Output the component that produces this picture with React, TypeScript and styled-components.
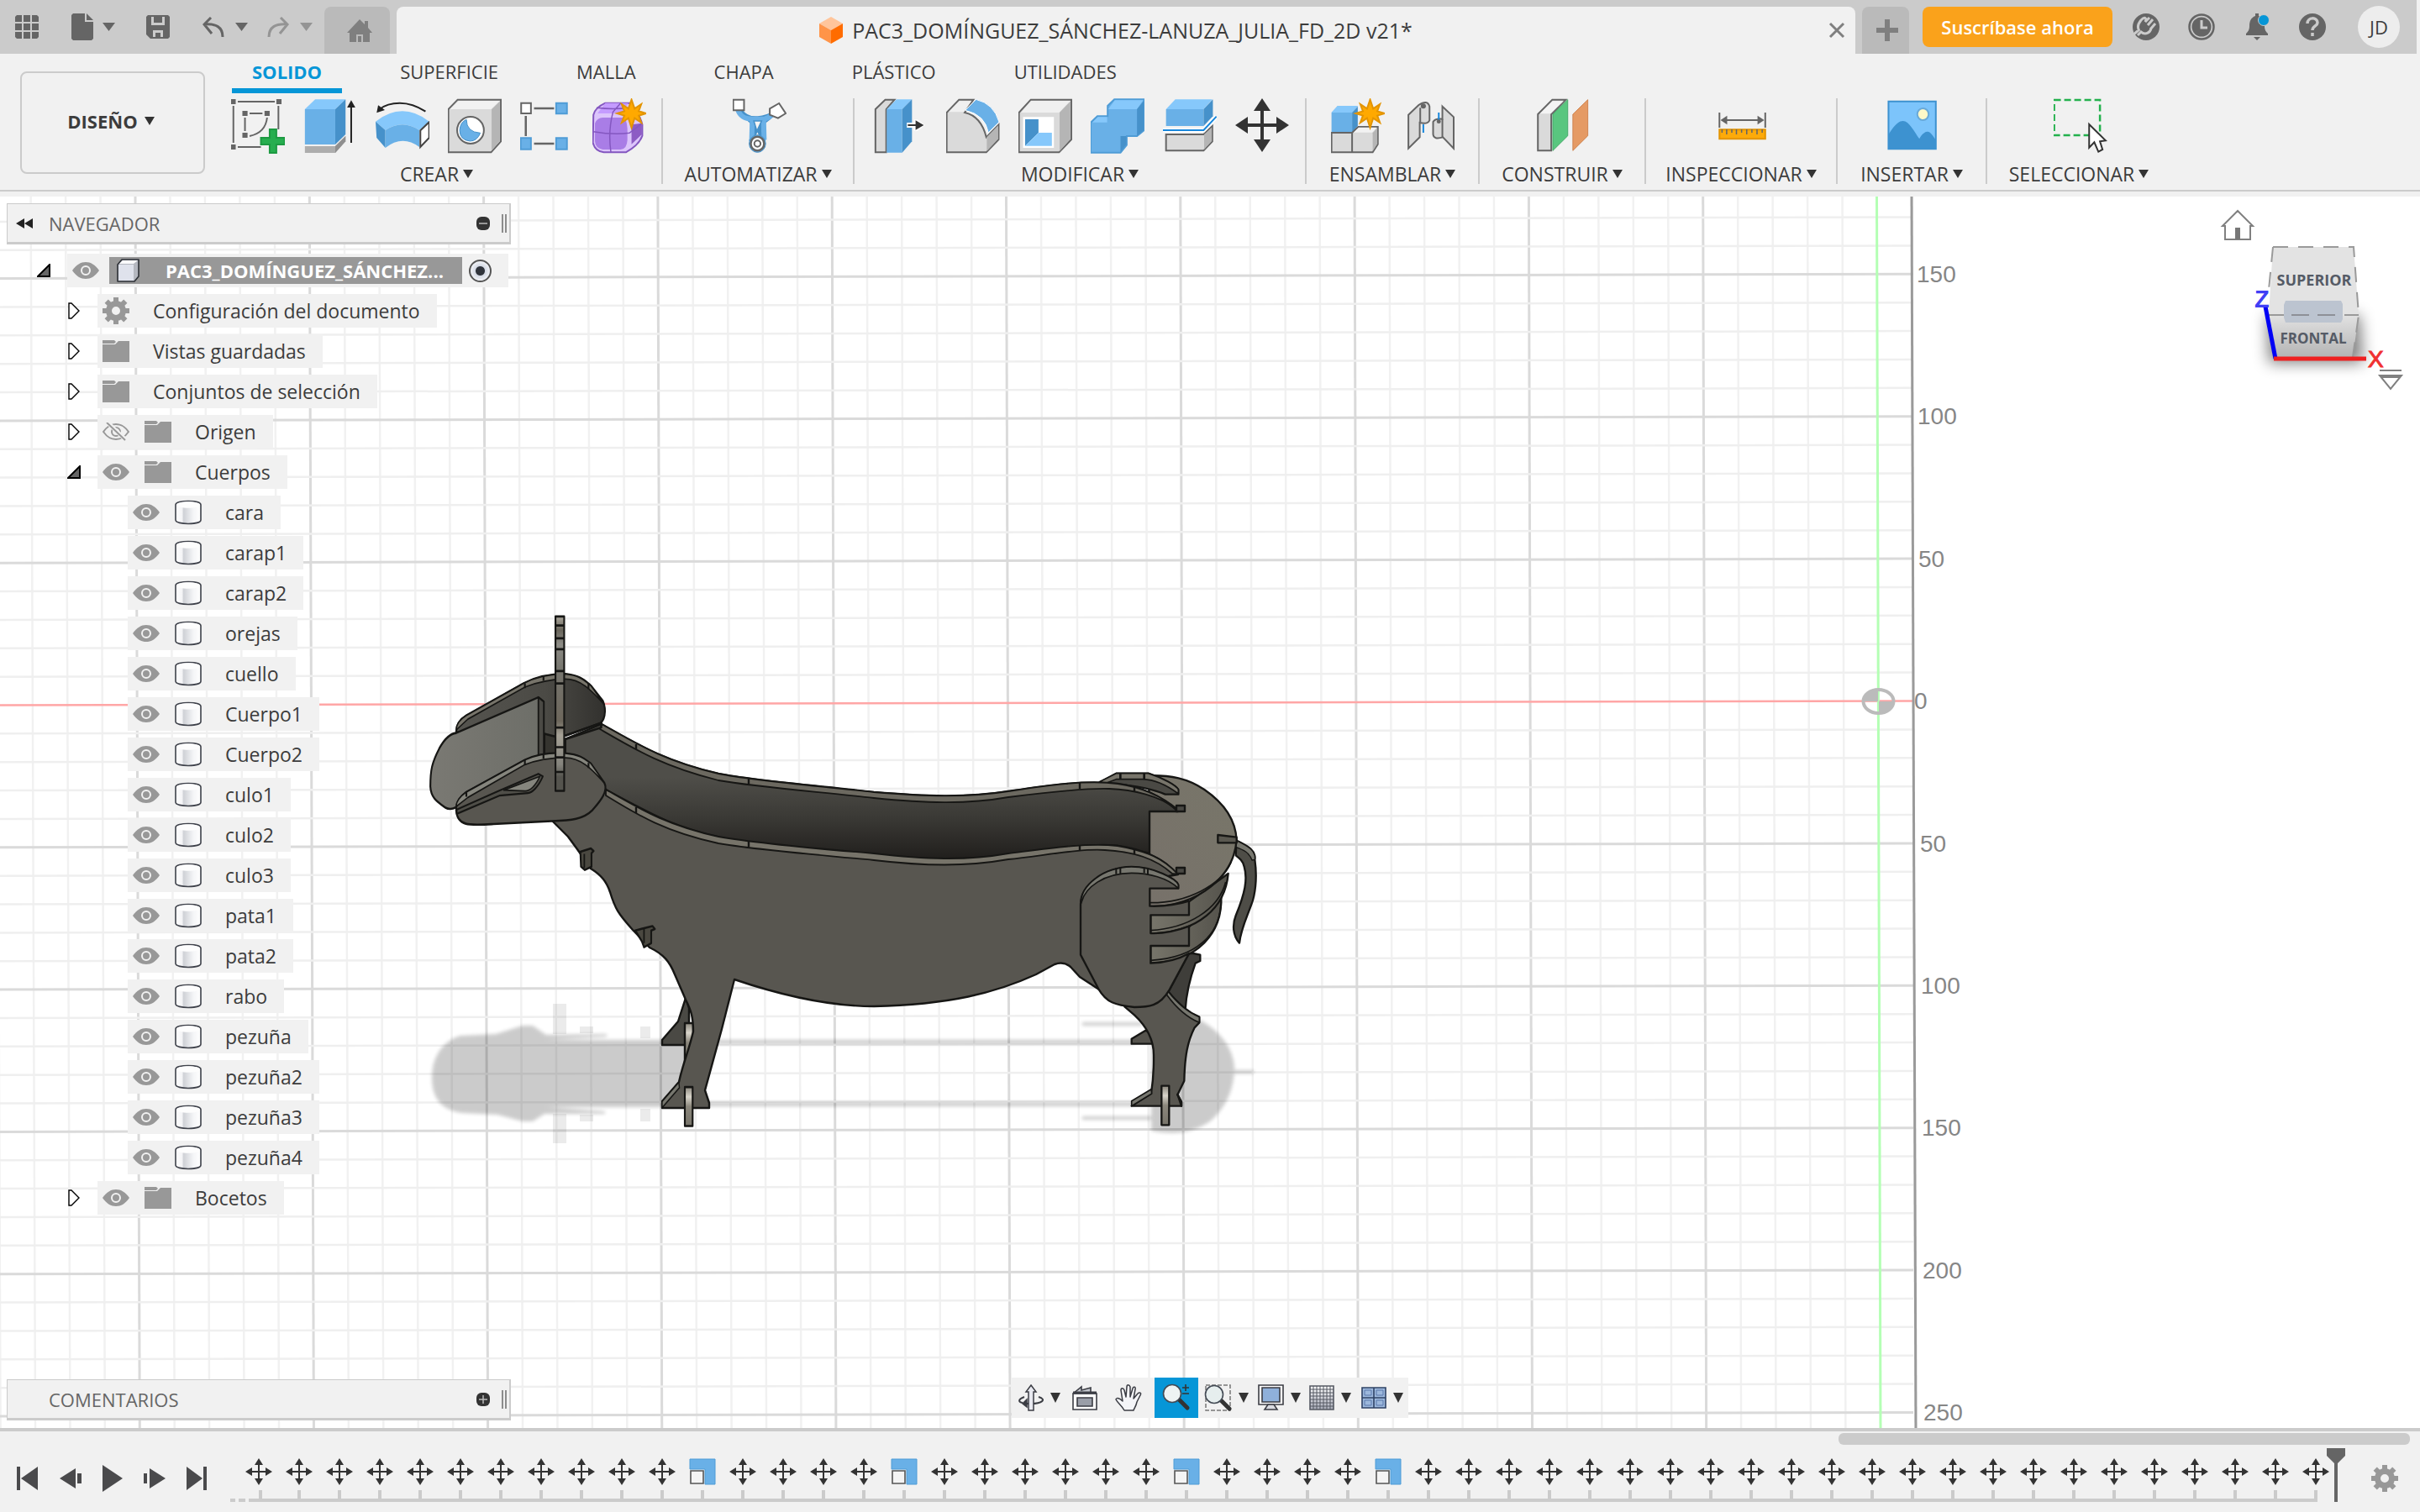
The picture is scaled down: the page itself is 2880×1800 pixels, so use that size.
import React from "react";
import styled, { createGlobalStyle, css } from "styled-components";

const GlobalStyle = createGlobalStyle`
  * { box-sizing: border-box; }
  html, body { margin: 0; padding: 0; }
  body { background: #f1f1f1; color: #3c3c3c; font-family: "Open Sans", "Noto Sans", sans-serif; font-size: 22px; line-height: 30px; }
  button { font: inherit; color: inherit; background: none; border: 0; padding: 0; margin: 0; cursor: pointer; }
  ul, ol { list-style: none; margin: 0; padding: 0; }
  svg { display: block; flex: none; }
`;

const Shell = styled.div`
  display: flex;
  flex-direction: column;
  height: 100vh;
  min-height: 1200px;
  overflow: hidden;
`;

/* ---------- title bar ---------- */
const TitleBar = styled.header`
  display: flex;
  height: 64px;
  flex: none;
  background: #cbcbcb;
  border-right: 4px solid #f1f1f1;
  padding-top: 8px;
`;
const QuickAccess = styled.div`
  display: flex;
  align-items: center;
  width: 386px;
  height: 48px;
  padding-left: 18px;
  color: #656565;
`;
const QuickButton = styled.button<{ $gap: number; $faded?: boolean }>`
  display: flex;
  margin-right: ${(p) => p.$gap}px;
  color: ${(p) => (p.$faded ? "#949494" : "#656565")};
`;
const TabShape = css`
  display: flex;
  align-items: center;
  justify-content: center;
  height: 56px;
  border-radius: 8px 8px 0 0;
`;
const HomeTab = styled.button`
  ${TabShape}
  width: 78px;
  margin-right: 8px;
  background: #bababa;
  color: #7f7f7f;
  padding-left: 6px;
`;
const DocumentTab = styled.div`
  ${TabShape}
  flex: 1;
  background: #f1f1f1;
  padding: 0 12px 0 8px;
  font-size: 25px;
`;
const DocumentName = styled.div`
  flex: 1;
  display: flex;
  justify-content: center;
  align-items: center;
  gap: 11px;
`;
const NewTab = styled.button`
  ${TabShape}
  width: 56px;
  margin: 0 16px 0 8px;
  background: #bababa;
  color: #7f7f7f;
  padding-left: 4px;
`;
const Subscribe = styled.button`
  width: 226px;
  height: 48px;
  border-radius: 8px;
  background: #faa21b;
  color: #fff;
  font-weight: 600;
`;
const AccountTools = styled.div`
  display: flex;
  align-items: center;
  gap: 34px;
  height: 48px;
  padding: 0 20px 0 24px;
  color: #656565;
`;
const Avatar = styled.button`
  width: 50px;
  height: 50px;
  margin-left: 4px;
  border-radius: 50%;
  background: #ededed;
  color: #3c3c3c;
`;

/* ---------- ribbon ---------- */
const Ribbon = styled.section`
  display: flex;
  flex: none;
  height: 164px;
  border-bottom: 2px solid #cbcbcb;
  margin-bottom: 6px;
`;
const Workspace = styled.button`
  display: flex;
  align-items: center;
  justify-content: center;
  gap: 8px;
  width: 220px;
  height: 122px;
  margin: 21px 8px 0 24px;
  padding: 0 4px 4px 0;
  border: 2px solid #cbcbcb;
  border-radius: 8px;
  font-weight: 700;
`;
const RibbonBody = styled.div`
  flex: 1;
`;
const Tabs = styled.div`
  display: flex;
  gap: 45px;
  padding-left: 24px;
`;
const Tab = styled.button<{ $on?: boolean }>`
  height: 47px;
  padding: 0 24px;
  border-bottom: 6px solid ${(p) => (p.$on ? "#0696d7" : "transparent")};
  color: ${(p) => (p.$on ? "#0696d7" : "inherit")};
  font-weight: ${(p) => (p.$on ? 700 : 400)};
`;
const Groups = styled.div`
  display: flex;
  padding-top: 6px;
`;
const Group = styled.div<{ $w: number }>`
  display: flex;
  flex-direction: column;
  align-items: center;
  width: ${(p) => p.$w}px;
  height: 102px;
  border-right: 2px solid #cbcbcb;
  &:last-child { border-right: 0; }
`;
const Tools = styled.div`
  display: flex;
  flex: none;
  gap: 22px;
  height: 75px;
  padding-left: 4px;
`;
const Tool = styled.button`
  display: flex;
  width: 64px;
  height: 64px;
`;
const GroupMenu = styled.button`
  display: flex;
  align-items: center;
  gap: 5px;
  font-size: 23px;
`;

/* ---------- canvas ---------- */
const Canvas = styled.main`
  position: relative;
  flex: 1;
  min-height: 0;
  background: #fff;
`;
const Scene = styled.svg`
  position: absolute;
  inset: 0;
  width: 100%;
  height: 100%;
`;
const Overlay = styled.div`
  position: relative;
  display: flex;
  flex-direction: column;
  height: 100%;
  padding: 8px 8px 9px;
`;
const PanelHead = styled.div`
  display: flex;
  align-items: center;
  width: 600px;
  height: 49px;
  padding: 0 3px 0 10px;
  background: #f1f1f1;
  border: 1px solid #cbcbcb;
  border-right-width: 2px;
  border-bottom-width: 3px;
  color: #666;
`;
const PanelIconSlot = styled.button`
  display: flex;
  width: 39px;
`;
const PanelTitle = styled.h2`
  flex: 1;
  margin: 0;
  font-size: 22px;
  font-weight: 400;
`;
const Grip = styled.span`
  width: 6px;
  height: 22px;
  margin-left: 14px;
  border-left: 2px solid #8c8c8c;
  border-right: 2px solid #8c8c8c;
`;
const Tree = styled.ul`
  display: flex;
  flex-direction: column;
  gap: 8px;
  padding-top: 11px;
`;
const TreeRow = styled.li<{ $depth: number }>`
  display: flex;
  align-items: center;
  height: 40px;
  padding-left: ${(p) => 36 * p.$depth}px;
`;
const Toggle = styled.button`
  display: flex;
  justify-content: center;
  width: 72px;
  padding-left: 16px;
`;
const RowBody = styled.div`
  display: flex;
  align-items: center;
  height: 40px;
  padding: 0 20px 0 6px;
  background: #f1f1f1;
  font-size: 23px;
`;
const RowIcon = styled.span<{ $tight?: boolean }>`
  display: flex;
  width: ${(p) => (p.$tight ? 44 : 50)}px;
`;
const RowName = styled.span`
  padding-left: 10px;
`;
const RootName = styled.span`
  display: flex;
  align-items: center;
  gap: 31px;
  width: 420px;
  height: 32px;
  padding-left: 9px;
  background: #989898;
  color: #fff;
  font-size: 22px;
  font-weight: 700;
`;
const ActiveRadio = styled.input`
  appearance: none;
  width: 27px;
  height: 27px;
  margin: 0 0 0 8px;
  border: 2px solid #555;
  border-radius: 50%;
  background: radial-gradient(circle, #30343c 0 5px, #d4d9e4 6px, #eef0f5 11px);
`;
const Bottom = styled.div`
  display: grid;
  grid-template-columns: 1fr auto 1fr;
  align-items: end;
  margin-top: auto;
`;
const ViewTools = styled.nav`
  display: flex;
  height: 48px;
  margin-bottom: 3px;
  background: #f1f1f1;
`;
const ViewTool = styled.button<{ $w: number; $on?: boolean }>`
  display: flex;
  align-items: center;
  justify-content: center;
  gap: 8px;
  width: ${(p) => p.$w}px;
  background: ${(p) => (p.$on ? "#0696d7" : "transparent")};
`;

/* ---------- timeline ---------- */
const Timeline = styled.footer`
  flex: none;
  height: 100px;
  border-top: 4px solid #cbcbcb;
  background: #f1f1f1;
`;
const ScrollTrack = styled.div`
  height: 20px;
  padding: 2px 12px 0;
  display: flex;
  justify-content: flex-end;
`;
const ScrollThumb = styled.div`
  width: 680px;
  height: 14px;
  border-radius: 6px;
  background: #cbcbcb;
`;
const TimelineRow = styled.div`
  display: flex;
  height: 64px;
`;
const Playback = styled.div`
  display: flex;
  align-items: center;
  width: 284px;
  padding: 8px 38px 0 20px;
  justify-content: space-between;
`;
const Features = styled.ol`
  position: relative;
  display: flex;
  height: 64px;
  align-items: flex-end;
  &::before {
    content: "";
    position: absolute;
    left: -10px;
    bottom: 0;
    width: 18px;
    height: 4px;
    background: linear-gradient(90deg, #cbcbcb 0 6px, transparent 6px 10px, #cbcbcb 10px);
  }
`;
const Feature = styled.li`
  display: flex;
  flex-direction: column;
  align-items: center;
  width: 48px;
  height: 52px;
  border-bottom: 4px solid #cbcbcb;
  &:first-child { width: 36px; margin-left: 12px; align-items: flex-start; }
  &:first-child > button { margin-left: -4px; }
  &:first-child::after { margin-left: 12px; }
  &:last-child { width: 26px; margin-right: 11px; align-items: flex-end; }
  &:last-child > button { margin-right: -14px; }
  &::after {
    content: "";
    width: 4px;
    height: 10px;
    margin-top: 6px;
    background: #cbcbcb;
  }
`;
const Spacer = styled.div`
  flex: 1;
`;
const SettingsButton = styled.button`
  display: flex;
  align-items: center;
  padding: 8px 26px 0 0;
`;

/* ---------- small drawings ---------- */
const Caret = ({ w = 12, h = 10, c = "#333" }: { w?: number; h?: number; c?: string }) => (
  <svg width={w} height={h} viewBox="0 0 12 10" preserveAspectRatio="none" aria-hidden="true">
    <path d="M0 0H12L6 10Z" fill={c} />
  </svg>
);
const Gear = () => (
  <svg width="32" height="32" viewBox="-16 -16 32 32">
    <circle r="8.5" fill="none" stroke="#989898" strokeWidth="7" />
    {[0, 45, 90, 135, 180, 225, 270, 315].map((a) => (
      <rect key={a} x="-3" y="-16" width="6" height="6" fill="#989898" transform={`rotate(${a})`} />
    ))}
  </svg>
);
const Eye = () => (
  <svg width="32" height="20" viewBox="0 0 32 20">
    <path d="M0 10C5 3 10 0 16 0S27 3 32 10C27 17 22 20 16 20S5 17 0 10Z" fill="#989898" />
    <circle cx="16" cy="10" r="5" fill="none" stroke="#f1f1f1" strokeWidth="2" />
  </svg>
);
const EyeOff = () => (
  <svg width="32" height="22" viewBox="0 0 32 22" fill="none" stroke="#989898" strokeWidth="2">
    <path d="M1 11C6 4 10 2 16 2S26 4 31 11C26 18 22 20 16 20S6 18 1 11Z" />
    <circle cx="16" cy="11" r="5" />
    <path d="M6 0L28 21" stroke="#f1f1f1" strokeWidth="5" />
    <path d="M5 0L27 21" />
  </svg>
);
const Folder = () => (
  <svg width="32" height="26" viewBox="0 0 32 26" fill="#989898">
    <path d="M0 0H14L16 2L14 4H0Z" />
    <path d="M0 5H15L19 1H32V26H0Z" />
  </svg>
);
const Body = () => (
  <svg width="32" height="30" viewBox="0 0 32 30">
    <defs>
      <linearGradient id="cyl">
        <stop offset="0" stopColor="#fff" /><stop offset=".25" stopColor="#f4f4f6" />
        <stop offset=".32" stopColor="#cfd1d6" /><stop offset=".7" stopColor="#f4f5f7" /><stop offset="1" stopColor="#fff" />
      </linearGradient>
    </defs>
    <path d="M1 6C1 0 31 0 31 6V24C31 30 1 30 1 24Z" fill="url(#cyl)" stroke="#3e414a" strokeWidth="1.6" />
    <path d="M2 6C2 1 30 1 30 6S2 11 2 6Z" fill="#fdfdfd" />
  </svg>
);
const Cube = () => (
  <svg width="27" height="28" viewBox="0 0 27 28">
    <path d="M1 7L6 1H26V21L21 27H1Z" fill="#b5b8c0" stroke="#2f3238" strokeWidth="1.6" strokeLinejoin="round" />
    <path d="M2 7H20V26H2Z" fill="#dfe2ec" /><path d="M3 6L7 2H25L20 6Z" fill="#fafafc" />
  </svg>
);
const Open = () => (
  <svg width="16" height="16" viewBox="0 0 16 16"><path d="M1 15L15 1V15Z" fill="#666" stroke="#000" strokeWidth="2" /></svg>
);
const Closed = () => (
  <svg width="14" height="20" viewBox="0 0 14 20"><path d="M1 1H4L13 10L4 19H1Z" fill="#fff" stroke="#000" strokeWidth="1.4" /></svg>
);
const Dot = ({ plus }: { plus?: boolean }) => (
  <svg width="16" height="16" viewBox="0 0 16 16">
    <rect width="16" height="16" rx="6" fill="#333" />
    <path d={plus ? "M3 8H13M8 3V13" : "M3 8H13"} stroke="#bbb" strokeWidth="1.5" />
  </svg>
);
const Move = () => (
  <svg width="64" height="64" viewBox="0 0 64 64" fill="#333">
    <path d="M32 0L42 15H34V30H49V22L64 32L49 42V34H34V49H42L32 64L22 49H30V34H15V42L0 32L15 22V30H30V15H22Z" />
  </svg>
);
const MoveSmall = () => (
  <svg width="32" height="32" viewBox="0 0 32 32" fill="#333">
    <path d="M16 0L21 8H17V15H24V11L32 16L24 21V17H17V24H21L16 32L11 24H15V17H8V21L0 16L8 11V15H15V8H11Z" />
  </svg>
);
const ScaleSmall = () => (
  <svg width="32" height="32" viewBox="0 0 32 32">
    <path d="M1 1H31V31H19V13H1Z" fill="#69b0e7" stroke="#4f9cd6" />
    <path d="M2 15H17V30H2Z" fill="#f4f4f4" stroke="#555" strokeWidth="1.6" />
  </svg>
);

/* Tool drawings share one coordinate sheet: each shows a window of it that starts at x. */
const Sheet = ({ x, children }: { x: number; children: React.ReactNode }) => (
  <svg width="64" height="66" viewBox={`${x} 351 104.5 198`} preserveAspectRatio="none">{children}</svg>
);
const G = "#656565";
const ve = { vectorEffect: "non-scaling-stroke" as const };
const Burst = ({ cx }: { cx: number }) => (
  <path
    d={`M${cx} 356L${cx + 6} 388L${cx + 19} 372L${cx + 14} 397L${cx + 28} 405L${cx + 14} 413L${cx + 19} 438L${cx + 6} 422L${cx} 456L${cx - 6} 422L${cx - 19} 438L${cx - 14} 413L${cx - 28} 405L${cx - 14} 397L${cx - 19} 372L${cx - 6} 388Z`}
    fill="#ffa900" stroke="#e39400" strokeWidth="2" {...ve}
  />
);
const icons = {
  sketch: (
    <Sheet x={448}>
      <g fill={G}><path d="M448 354h9v18h-9zM536 354h10v18h-10zM448 516h9v18h-9zM470 396h10v18h-10zM513 396h10v18h-10zM470 474h10v18h-10z" /></g>
      <path d="M461 363H533M452.500 378V510M461 525H506M540 378V462M484 405H509M475 420V468" fill="none" stroke={G} strokeWidth="2" {...ve} />
      <path d="M518 420Q515 474 484 486" fill="none" stroke={G} strokeWidth="2" {...ve} />
      <path d="M523 462H536V492H552V516H536V546H523V516H506V492H523Z" fill="#27ae4f" stroke="#1d9a42" strokeWidth="2" {...ve} />
    </Sheet>
  ),
  extrude: (
    <Sheet x={588}>
      <path d="M591 522H650L670 486V505L650 546H591Z" fill="#adadad" /><path d="M650 522L670 486V505L650 546Z" fill="#8f8f8f" />
      <path d="M591 390L611 355H670L650 390Z" fill="#86c8fb" /><path d="M591 390H650V516H591Z" fill="#69b0e7" /><path d="M650 390L670 355V480L650 516Z" fill="#4691ca" />
      <path d="M681 510V380" stroke="#222" strokeWidth="2" {...ve} /><path d="M681 358L689 384H673Z" fill="#222" />
    </Sheet>
  ),
  revolve: (
    <Sheet x={728}>
      <path d="M825 398Q800 368 775 368Q750 368 736 390" fill="none" stroke="#222" strokeWidth="2" {...ve} /><path d="M730 403L733 376L746 393Z" fill="#222" />
      <path d="M728 434Q780 360 832 434L813 465Q780 425 747 465Z" fill="#86c8fb" />
      <path d="M728 434L747 465V528L730 492Z" fill="#4691ca" /><path d="M747 465Q780 425 813 465V525Q780 480 747 528Z" fill="#69b0e7" />
      <path d="M815 466L832 436V492L815 525Z" fill="#fff" stroke="#444" strokeWidth="2" {...ve} />
    </Sheet>
  ),
  hole: (
    <Sheet x={869}>
      <path d="M870 390L888 356H972V505L953 544H870Z" fill="#dadada" stroke={G} strokeWidth="2" {...ve} />
      <path d="M873 390L890 360H970L953 390Z" fill="#f2f2f2" /><path d="M954 391L970 362V503L954 538Z" fill="#b5b5b5" />
      <ellipse cx="913" cy="465" rx="26" ry="48" fill="#fff" stroke={G} strokeWidth="2" {...ve} />
      <path d="M905 427Q905 472 932 475Q926 504 912 504Q892 500 892 465Q893 436 905 427Z" fill="#69b0e7" stroke="#4691ca" {...ve} />
    </Sheet>
  ),
  pattern: (
    <Sheet x={1009}>
      <path d="M1036 387H1075M1020 414V486M1036 513H1075" stroke={G} strokeWidth="2.500" {...ve} />
      <path d="M1011 368h19v37h-19z" fill="#fff" stroke={G} strokeWidth="2" {...ve} />
      <path d="M1079 368h21v38h-21zM1010 493h20v40h-20zM1079 493h21v40h-21z" fill="#69b0e7" stroke="#4f9cd6" strokeWidth="2" {...ve} />
    </Sheet>
  ),
  form: (
    <Sheet x={1150}>
      <path d="M1152 410Q1155 385 1175 368H1225Q1245 420 1247 445V485Q1240 520 1215 544H1172Q1155 540 1151 510Z" fill="#dcc4fb" stroke="#8457c0" strokeWidth="2" {...ve} />
      <path d="M1175 368H1220L1205 405H1160Z" fill="#c49bff" /><path d="M1226 445L1246 440V480L1226 515Z" fill="#8d5cc4" />
      <path d="M1155 440Q1160 418 1172 420H1210Q1217 425 1218 460V500Q1217 532 1205 534H1170Q1156 530 1155 505Z" fill="#a97de6" />
      <path d="M1152 470Q1190 482 1222 475L1247 440M1186 544Q1180 470 1190 400L1205 368M1158 385Q1190 392 1225 385" fill="none" stroke="#8457c0" strokeWidth="1.500" {...ve} />
      <Burst cx={1226} />
    </Sheet>
  ),
  automate: (
    <Sheet x={1424}>
      <path d="M1434 388C1438 425 1462 408 1468 470L1459 505M1440 396C1455 440 1490 420 1509 400M1505 385C1498 440 1478 420 1476 470L1484 505" fill="none" stroke="#4691ca" strokeWidth="5" {...ve} />
      <path d="M1434 392C1440 425 1455 425 1462 425H1486C1495 420 1502 412 1508 395M1462 430L1461 500M1484 430L1485 500" fill="none" stroke="#69b0e7" strokeWidth="6" {...ve} />
      <path d="M1465 432L1471 468L1480 432Z" fill="#f4f4f4" stroke="#4691ca" strokeWidth="1.500" {...ve} />
      <path d="M1425 356H1446V394H1425Z" fill="#fff" stroke={G} strokeWidth="2" {...ve} /><path d="M1514 369L1527 405L1512 422L1496 410V388Z" fill="#fff" stroke={G} strokeWidth="2" {...ve} />
      <ellipse cx="1472" cy="513" rx="16" ry="31" fill="#69b0e7" stroke="#4691ca" {...ve} />
      <ellipse cx="1472" cy="513" rx="13" ry="25" fill="#fff" stroke={G} strokeWidth="2.500" {...ve} /><ellipse cx="1472" cy="513" rx="6" ry="11" fill="#fff" stroke={G} strokeWidth="2" {...ve} />
    </Sheet>
  ),
  press: (
    <Sheet x={132}>
      <path d="M135 390L154 356H172L156 390V544H135Z" fill="#dadada" stroke={G} strokeWidth="2" {...ve} />
      <path d="M157 390L176 355H206L187 390Z" fill="#86c8fb" /><path d="M157 390H187V545H157Z" fill="#69b0e7" /><path d="M187 390L206 355V505L187 545Z" fill="#4691ca" />
      <path d="M196 438H210V427H217L231 447L217 467H210V456H196Z" fill="#fff" /><path d="M198 444H213V430L229 447L213 464V450H198Z" fill="#333" />
    </Sheet>
  ),
  fillet: (
    <Sheet x={272}>
      <path d="M273 402L297 356H325L308 402Q340 415 350 490L374 445V498L350 544H273Z" fill="#dadada" stroke={G} strokeWidth="2" {...ve} />
      <path d="M277 400L298 361H321L306 400Z" fill="#f0f0f0" /><path d="M351 490L373 448V496L351 540Z" fill="#b5b5b5" />
      <path d="M330 355Q365 370 375 436L354 474Q348 410 309 394Z" fill="#69b0e7" stroke="#fff" strokeWidth="1" {...ve} />
    </Sheet>
  ),
  shell: (
    <Sheet x={412}>
      <path d="M413 402L436 356H515V498L491 544H413Z" fill="#dadada" stroke={G} strokeWidth="2" {...ve} />
      <path d="M417 402L437 360H513L491 402Z" fill="#f0f0f0" /><path d="M492 402L513 362V496L492 540Z" fill="#b5b5b5" />
      <path d="M421 418H481V528H421Z" fill="#fff" /><path d="M425 426H451V474L425 521Z" fill="#4691ca" /><path d="M451 474H477V521H425Z" fill="#86c8fb" />
    </Sheet>
  ),
  combine: (
    <Sheet x={553}>
      <path d="M553 438L566 415H586V378L599 355H657V465L643 486H623V518L611 545H553Z" fill="#69b0e7" stroke="#4f9cd6" strokeWidth="2" {...ve} />
      <path d="M587 390L600 358H655L643 390ZM556 437L567 418H585V437Z" fill="#86c8fb" /><path d="M643 390L656 360V464L643 485ZM611 486H622V516L611 542Z" fill="#4691ca" />
    </Sheet>
  ),
  split: (
    <Sheet x={694}>
      <path d="M700 390L718 355H790L773 390Z" fill="#86c8fb" /><path d="M700 390H773V450H700Z" fill="#69b0e7" /><path d="M773 390L791 355V415L773 450Z" fill="#4691ca" />
      <path d="M700 480H773L790 450V505L773 538H700Z" fill="#dadada" stroke={G} strokeWidth="2" {...ve} /><path d="M774 480L789 455V503L774 534Z" fill="#b5b5b5" />
      <path d="M693 465H773L798 416" fill="none" stroke="#fff" strokeWidth="5" {...ve} /><path d="M693 465H773L798 416" fill="none" stroke="#1787dc" strokeWidth="2" {...ve} />
    </Sheet>
  ),
  move: <Move />,
  component: (
    <Sheet x={1019}>
      <path d="M1020 402L1032 378H1071L1060 402V473H1020Z" fill="#69b0e7" /><path d="M1020 402L1032 378H1071L1060 402Z" fill="#86c8fb" /><path d="M1060 402L1071 380V450L1060 473Z" fill="#4691ca" />
      <path d="M1020 474H1060L1072 453H1110V515L1100 544H1020Z" fill="#dadada" stroke={G} strokeWidth="2" {...ve} />
      <path d="M1060 474V544" stroke={G} strokeWidth="2" {...ve} /><path d="M1063 473L1073 455H1108L1099 473Z" fill="#f2f2f2" /><path d="M1100 475L1109 457V513L1100 540Z" fill="#b5b5b5" />
      <Burst cx={1095} />
    </Sheet>
  ),
  joint: (
    <Sheet x={1158}>
      <g stroke={G} strokeWidth="2" fill="#dadada">
        <path d="M1168 410L1188 375Q1205 355 1209 380V430Q1205 445 1190 438V490L1168 530Z" {...ve} />
        <path d="M1234 380L1256 418V530L1235 490Q1217 500 1216 480V435Q1220 422 1234 425Z" {...ve} />
      </g>
      <path d="M1191 385V435M1234 425V490" stroke={G} strokeWidth="2" {...ve} /><ellipse cx="1197" cy="379" rx="5" ry="9" fill={G} />
      <path d="M1197 444V474M1227 402V432" stroke="#1787dc" strokeWidth="2" {...ve} /><ellipse cx="1227" cy="434" rx="4" ry="7" fill={G} />
    </Sheet>
  ),
  plane: (
    <Sheet x={1420}>
      <path d="M1422 408L1450 356H1476L1448 408V538H1422Z" fill="#dadada" stroke={G} strokeWidth="2" {...ve} /><path d="M1426 406L1451 361H1472L1447 406Z" fill="#f4f4f4" />
      <path d="M1451 408L1480 356V485L1451 538Z" fill="#59c67f" stroke="#45ab69" {...ve} /><path d="M1490 408L1519 356V485L1490 538Z" fill="#e59a64" stroke="#cf8450" {...ve} />
    </Sheet>
  ),
  measure: (
    <Sheet x={200}>
      <path d="M207 402V456M296 402V456M216 429H288" stroke={G} strokeWidth="2" {...ve} /><path d="M209 429L222 413V445ZM294 429L281 413V445Z" fill={G} />
      <path d="M207 463H296V496H207Z" fill="#fdaa0a" stroke="#e39400" strokeWidth="2" {...ve} /><path d="M212 462v12M221 462v18M231 462v12M240 462v18M250 462v12M260 462v18M270 462v12M280 462v18M290 462v12" stroke={G} strokeWidth="1.500" {...ve} />
    </Sheet>
  ),
  image: (
    <Sheet x={530}>
      <path d="M534 362H626V532H534Z" fill="#7cc4fb" stroke="#3d92d0" strokeWidth="2" {...ve} />
      <path d="M534 480C548 440 556 432 562 432C574 432 584 470 594 496C600 475 606 470 610 470C616 470 622 490 626 500V532H534Z" fill="#3d92d0" />
      <ellipse cx="601" cy="408" rx="11" ry="21" fill="#fdf8c8" stroke="#69a9d8" strokeWidth="2" {...ve} />
    </Sheet>
  ),
  select: (
    <Sheet x={853}>
      <path d="M854 357H943V483H854Z" fill="none" stroke="#23b14d" strokeWidth="2.500" strokeDasharray="8 4" {...ve} />
      <path d="M922 444L954 502L943 505L948 534L940 542L932 508L922 527Z" fill="#fff" stroke="#333" strokeWidth="2" {...ve} />
    </Sheet>
  ),
};

const toolGroups: { name: string; w: number; tools: [keyof typeof icons, string][] }[] = [
  { name: "CREAR", w: 537, tools: [["sketch", "Crear boceto"], ["extrude", "Extruir"], ["revolve", "Revolución"], ["hole", "Agujero"], ["pattern", "Patrón"], ["form", "Crear forma"]] },
  { name: "AUTOMATIZAR", w: 228, tools: [["automate", "Modelado automatizado"]] },
  { name: "MODIFICAR", w: 538, tools: [["press", "Pulsar/Tirar"], ["fillet", "Empalme"], ["shell", "Vaciado"], ["combine", "Combinar"], ["split", "Dividir cuerpo"], ["move", "Mover"]] },
  { name: "ENSAMBLAR", w: 206, tools: [["component", "Nuevo componente"], ["joint", "Unión"]] },
  { name: "CONSTRUIR", w: 198, tools: [["plane", "Plano de desfase"]] },
  { name: "INSPECCIONAR", w: 228, tools: [["measure", "Medir"]] },
  { name: "INSERTAR", w: 178, tools: [["image", "Insertar imagen"]] },
  { name: "SELECCIONAR", w: 218, tools: [["select", "Seleccionar"]] },
];

type RowData = { name: string; depth: number; state?: "open" | "closed"; eye?: "on" | "off"; icon: "gear" | "folder" | "body" };
const bodies = ["cara", "carap1", "carap2", "orejas", "cuello", "Cuerpo1", "Cuerpo2", "culo1", "culo2", "culo3", "pata1", "pata2", "rabo", "pezuña", "pezuña2", "pezuña3", "pezuña4"];
const rows: RowData[] = [
  { name: "Configuración del documento", depth: 1, state: "closed", icon: "gear" },
  { name: "Vistas guardadas", depth: 1, state: "closed", icon: "folder" },
  { name: "Conjuntos de selección", depth: 1, state: "closed", icon: "folder" },
  { name: "Origen", depth: 1, state: "closed", eye: "off", icon: "folder" },
  { name: "Cuerpos", depth: 1, state: "open", eye: "on", icon: "folder" },
  ...bodies.map((name): RowData => ({ name, depth: 2, eye: "on", icon: "body" })),
  { name: "Bocetos", depth: 1, state: "closed", eye: "on", icon: "folder" },
];
const rowIcon = { gear: <Gear />, folder: <Folder />, body: <Body /> };

/* ---------- modelling scene ---------- */
const Grid = () => {
  const lines: React.ReactNode[] = [];
  for (let i = -4; i <= 51; i++) {
    if (i === 50) continue;
    const major = i % 5 === 0;
    lines.push(<path key={`v${i}`} d={`M${161 + 41.46 * i} 234L${166.3 + 41.43 * i} 1700`} stroke={major ? "#dadada" : "#f1f1f1"} strokeWidth={major ? 3 : 2.5} />);
  }
  for (let i = -17; i <= 25; i++) {
    if (i === 0) continue;
    const major = i % 5 === 0;
    lines.push(<path key={`h${i}`} d={`M0 ${839.5 + 33.86 * i}L2277 ${834.5 + 33.88 * i}`} stroke={major ? "#dadada" : "#efefef"} strokeWidth={major ? 3 : 2.5} />);
  }
  return <g>{lines}</g>;
};
const axisLabels = [150, 100, 50, 0, 50, 100, 150, 200, 250];

const Model = () => (
  <g stroke="#161614" strokeWidth="2.4" strokeLinejoin="round">
    <defs>
      <linearGradient id="hollow" gradientUnits="userSpaceOnUse" x1="0" x2="0" y1="925" y2="1022"><stop offset="0" stopColor="#4f4e49" /><stop offset=".5" stopColor="#3a3935" /><stop offset="1" stopColor="#211f1d" /></linearGradient>
      <linearGradient id="disk" x1="0" x2="1" y1="1" y2="0"><stop offset="0" stopColor="#77716a" /><stop offset="1" stopColor="#787669" /></linearGradient>
      <linearGradient id="lower"><stop offset="0" stopColor="#77756a" /><stop offset="1" stopColor="#55534c" /></linearGradient>
      <linearGradient id="muzzle" x1="0" x2="1"><stop offset="0" stopColor="#7a7973" /><stop offset="1" stopColor="#6d6e68" /></linearGradient>
      <linearGradient id="headFar" x1="0" x2="1"><stop offset="0" stopColor="#55544f" /><stop offset=".6" stopColor="#4b4a45" /><stop offset="1" stopColor="#32312e" /></linearGradient>
      <linearGradient id="hoof" x1="0" x2="0" y1="0" y2="1"><stop offset="0" stopColor="#8a867c" /><stop offset=".25" stopColor="#d9d5cb" /><stop offset=".5" stopColor="#8b877c" /><stop offset="1" stopColor="#77746a" /></linearGradient>
      <linearGradient id="ear" x1="0" x2="0" y1="0" y2="1"><stop offset="0" stopColor="#aaa69b" /><stop offset=".08" stopColor="#6a665c" /><stop offset=".16" stopColor="#8d8c86" /><stop offset=".3" stopColor="#77766f" /><stop offset=".6" stopColor="#6d675c" /><stop offset=".68" stopColor="#a5a196" /><stop offset=".85" stopColor="#84837c" /><stop offset=".92" stopColor="#55544e" /></linearGradient>
      <filter id="soft" x="-10%" y="-10%" width="120%" height="120%"><feGaussianBlur stdDeviation="2" /></filter>
    </defs>

    {/* ground shadow */}
    <g stroke="none" fill="#000" opacity=".2" filter="url(#soft)">
      <path d="M514 1283C514 1255 530 1238 548 1233L590 1231L622 1221L634 1221L650 1232L722 1231V1234L650 1238H820V1318H650L720 1323V1326L648 1326L634 1335L622 1335L592 1327L550 1325C528 1322 514 1310 514 1283Z" />
      <path d="M820 1238H1350V1243H820ZM820 1312H1350V1317H820ZM1288 1217H1360V1221H1288ZM1288 1329H1370V1333H1288ZM1466 1274H1492V1278H1466Z" />
      <path d="M1370 1240V1346Q1410 1355 1440 1335Q1469 1310 1469 1270Q1466 1236 1428 1214Z" />
    </g>
    <g stroke="none" fill="#000" opacity=".08">
      <path d="M658 1195H674V1231H658ZM658 1326H674V1361H658ZM690 1222H706V1230H690ZM690 1327H706V1335H690ZM762 1222H774V1236H762ZM762 1320H774V1335H762Z" />
    </g>

    {/* hind end: tail, far leg and discs */}
    <g transform="translate(1200 880) scale(.33333)" strokeWidth="7">
      <path d="M645 765L660 765L685 770V792L668 800C650 850 636 900 632 965L570 905Z" fill="#3f3e3a" />
      <path d="M490 1040L440 1070V1088H520L510 1050Z" fill="#55534d" />
      <path d="M815 362C850 380 885 395 880 430C890 500 880 560 868 590C850 640 830 680 825 728C800 700 800 660 812 630C845 550 855 500 842 455C838 435 825 425 812 415Z" fill="#4e4d47" />
      <path d="M815 362C850 380 885 395 880 430L870 432C860 405 840 395 812 385Z" fill="#77776f" strokeWidth="4" />
      <path d="M760 560C765 690 680 795 508 800V738L645 670Z" fill="url(#lower)" />
      <path d="M508 790C680 780 750 690 758 600" fill="none" strokeWidth="5" />
      <path d="M785 480C775 600 680 690 508 695V628L645 580Z" fill="url(#lower)" />
      <path d="M508 683C640 675 750 610 776 510" fill="none" strokeWidth="5" />
      <path d="M500 130C580 128 640 140 700 180C780 235 812 300 815 360C805 490 680 598 503 598V200Z" fill="url(#disk)" />
      <path d="M503 584C640 586 760 520 795 440" fill="none" strokeWidth="5" />
      <path d="M748 342L815 350V370H748Z" fill="#5a5850" />
      <path d="M325 155L385 122H500C550 138 600 165 607 180V197H560Q500 170 380 160Z" fill="#4a4944" />
      <path d="M325 152L385 122H500C550 138 600 165 607 180V195Q540 145 480 143H385L345 158Z" fill="#77746a" strokeWidth="5" />
      <path d="M400 122V143M485 122V143" fill="none" strokeWidth="8" />
    </g>

    {/* hollow between the two body plates */}
    <path d="M672 880L716 862C757 885 790 906 855 921C900 930 980 936 1040 943C1100 948 1150 950 1200 942C1240 936 1290 928 1330 933C1360 937 1385 950 1402 966H1368V1016L1330 1007L1200 1018Q1139 1026 1040 1019L890 1003Q800 990 721 940L690 912L672 900Z" fill="url(#hollow)" />
    <path d="M716 862C757 885 790 906 855 921C900 930 980 936 1040 943C1100 948 1150 950 1200 942C1240 936 1290 928 1330 933C1360 937 1385 950 1402 964L1398 962C1380 948 1350 940 1320 939C1290 938 1240 944 1200 949C1150 958 1100 956 1040 950C980 943 900 937 855 929C790 913 757 893 714 868Z" fill="#6c6960" strokeWidth="1.8" />
    <path d="M1400 959H1410V966H1400Z" fill="#4a4944" />

    {/* far front leg */}
    <path d="M816 1188L807 1216L788 1238V1244H820V1200Z" fill="#4a4944" />
    <rect x="815" y="1218" width="10" height="46" fill="url(#hoof)" />

    {/* near body plate */}
    <path d="M657 977L676 996L687 1011L703 1034C716 1042 722 1050 726 1062C732 1082 736 1088 753 1107L773 1128C790 1136 797 1145 803 1160L816 1190C822 1202 825 1210 825 1228C820 1250 813 1265 808 1288L788 1311V1319H844V1313L839 1298L859 1225L874 1166C930 1185 990 1198 1040 1198C1130 1196 1185 1182 1233 1160L1255 1148Q1266 1144 1274 1151L1285 1163L1308 1178L1340 1170L1362 1048L1402 1041H1400C1385 1020 1350 1006 1313 1006C1270 1006 1230 1015 1200 1017C1150 1025 1100 1024 1040 1019L890 1003C830 1000 780 972 721 940L700 960Z" fill="#585650" />
    <path d="M721 940C757 960 790 982 855 996C900 1004 980 1011 1040 1016C1100 1023 1150 1025 1200 1016C1240 1011 1290 1003 1330 1007C1365 1013 1385 1022 1402 1041L1395 1040C1375 1022 1350 1014 1315 1012C1285 1010 1240 1019 1200 1023C1150 1032 1100 1031 1040 1024C980 1018 900 1012 855 1004C790 990 757 969 721 947Z" fill="#77746a" strokeWidth="1.8" />
    <path d="M757 886V892M891 927V933M1285 932V939M1350 936V943M757 961V968M891 1001V1008M1285 1007V1013M1350 1010V1017" />
    <path d="M1400 1033H1410V1040H1400Z" fill="#4a4944" />

    {/* near hind leg and hip plate */}
    <g transform="translate(1200 880) scale(.33333)" strokeWidth="7">
      <path d="M415 955L450 985Q520 1050 519 1130Q520 1200 510 1265L440 1310H618V1295L604 1270L628 1220C630 1130 640 1080 665 1030L682 1012V992C640 975 605 945 570 900Z" fill="#585650" />
      <path d="M510 1250L440 1292V1310L512 1266ZM570 900C605 945 640 975 682 992V1012C640 995 600 960 565 912Z" fill="#77776f" strokeWidth="5" />
      <path d="M618 1310V1295L604 1268Z" fill="#111" />
      <path d="M258 590C258 520 340 458 440 456C520 456 600 500 607 520V533H505V596C560 598 600 592 645 578V628H508V693C560 695 600 685 645 668V738H508V800C560 798 610 785 645 765L575 895C540 955 500 957 450 957C380 950 350 940 322 892L258 770Z" fill="#585650" />
      <path d="M258 590C258 520 340 458 440 456C520 456 600 500 607 520V533C570 495 500 478 440 478C340 478 275 530 262 580Z" fill="#77776f" strokeWidth="5" />
      <path d="M385 460V482M400 458V480M485 458V478M498 462V484" fill="none" strokeWidth="6" />
      <rect x="547" y="1238" width="27" height="140" fill="url(#hoof)" />
    </g>

    {/* head */}
    <g transform="translate(480 700) scale(.35714 .43367)" strokeWidth="6">
      <path d="M176 395C176 375 190 360 210 350L400 262C450 240 500 236 540 236C590 240 605 255 625 268L665 310C680 340 668 365 655 372L540 405L470 410L300 400Z" fill="url(#headFar)" />
      <path d="M176 390C176 375 190 360 210 350L400 262C450 240 500 236 540 236C590 240 605 255 625 268L668 318C640 295 600 250 540 250C490 250 450 258 405 272L215 360Z" fill="#77746a" strokeWidth="4" />
      <path d="M405 262V275M467 240V255M617 262V278M540 405L660 370V383L540 415" fill="none" />
      <path d="M470 400L540 415V470L470 460Z" fill="#35342f" />
      <path d="M450 300L176 398C150 400 130 425 120 440C95 480 90 500 90 545C92 575 110 585 140 603C160 612 172 603 180 600L468 480V312Z" fill="url(#muzzle)" />
      <path d="M450 300L468 312V480L450 470Z" fill="#4a4944" strokeWidth="5" />
      <path d="M176 610C176 585 190 572 210 560L405 472C450 455 500 452 540 454C590 458 605 470 625 482L670 535C685 560 650 590 630 610C600 635 560 638 495 640L300 648C220 652 180 655 176 610Z" fill="#585650" />
      <path d="M176 600C176 585 190 572 210 560L405 472C450 455 500 452 540 454C590 458 605 470 625 482L670 535C640 510 600 466 540 466C490 466 450 470 405 485L215 575Z" fill="#85857d" strokeWidth="4" />
      <path d="M405 472V485M467 457V468M617 480V494M210 560V573" fill="none" />
      <path d="M178 608L310 560L450 510L465 517C450 545 430 562 415 563L320 570L178 620Z" fill="#4f4e48" strokeWidth="5" />
      <path d="M335 555L455 517C440 545 420 558 405 557Z" fill="#85857d" strokeWidth="4" />
      <rect x="507" y="78" width="29" height="479" fill="url(#ear)" />
      <path d="M507 103H536M507 138H536M507 168H536M507 228H536M507 262H536M507 383H536M507 437H536M507 465H536M507 505H536" fill="none" />
      <path d="M590 724L625 715L634 722L627 728V765L605 774L592 765Z" fill="#4a4840" />
      <path d="M773 940L830 928L838 936L826 940V975L802 986L795 970Z" fill="#4a4840" />
      <path d="M603 730V768M802 935V975" fill="none" strokeWidth="5" />
      <path d="M918 1357L862 1410V1427L920 1372Z" fill="#77776f" strokeWidth="4" />
      <rect x="938" y="1370" width="26" height="107" fill="url(#hoof)" />
    </g>
  </g>
);

const ViewCube = () => (
  <g>
    <defs>
      <linearGradient id="front" x1="0" x2="0" y1="0" y2="1"><stop offset="0" stopColor="#e2e2e2" /><stop offset="1" stopColor="#b4b4b4" /></linearGradient>
      <filter id="cubeShadow" x="-30%" y="-30%" width="160%" height="170%"><feGaussianBlur stdDeviation="9" /></filter>
    </defs>
    <g fill="#fff" stroke="#808080" strokeWidth="2">
      <path d="M2663 251L2645 269H2648V285H2678V269H2681Z" /><path d="M2660 271H2666V285H2660Z" fill="#777" stroke="none" />
      <path d="M2832 441H2858M2832 447H2858L2845 463Z" /><path d="M2833 449H2857" />
    </g>
    <path d="M2698 375H2808L2812 432H2700Z" fill="#000" opacity=".5" filter="url(#cubeShadow)" />
    <path d="M2705 294H2801L2807 375L2700 375Z" fill="#e3e3e3" /><path d="M2700 375H2807L2800 425H2707Z" fill="url(#front)" />
    <path d="M2705 294H2801L2807 375L2800 425M2705 294L2700 345M2700 375H2807" fill="none" stroke="#9a9a9a" strokeWidth="2" strokeDasharray="18 12" />
    <path d="M2720 358H2786L2788 362V380L2786 384H2720L2718 378V363Z" fill="#bcc4d0" /><path d="M2727 375H2748M2758 375H2779" stroke="#8d9097" strokeWidth="2" />
    <text x="2754" y="340" textAnchor="middle" fontFamily="Open Sans" fontWeight="700" fontSize="18" fill="#555b66">SUPERIOR</text>
    <text x="2753" y="409" textAnchor="middle" fontFamily="Open Sans" fontWeight="700" fontSize="17" fill="#555b66">FRONTAL</text>
    <path d="M2696 365L2708 427" stroke="#0000f5" strokeWidth="5" /><path d="M2706 427H2816" stroke="#ee2020" strokeWidth="5" />
    <text x="2683" y="366" fontFamily="Liberation Sans" fontWeight="700" fontSize="29" fill="#4040f5">Z</text>
    <text x="2818" y="437" fontFamily="Liberation Sans" fontSize="28" stroke="#f03030" fill="#f03030">X</text>
  </g>
);

const ViewIcon = {
  orbit: (
    <svg width="30" height="32" viewBox="0 0 30 32" fill="#e8e9f0" stroke="#3b3d44" strokeWidth="1.5">
      <path d="M7 15C-1 18 0 21 5 22M24 15C34 18 28 23 15 23H6" fill="none" strokeWidth="2" /><path d="M10 18L5 23L10 27Z" fill="#3b3d44" />
      <path d="M15 1L21 9H18V31H12V9H9Z" />
    </svg>
  ),
  look: (
    <svg width="30" height="30" viewBox="0 0 30 30" stroke="#3b3d44" strokeWidth="1.6">
      <path d="M1 10L11 2V6L22 3V9" fill="#c4c7ce" /><path d="M1 10H29V29H1Z" fill="#fff" /><path d="M1 9H29" strokeWidth="3" /><path d="M6 15H24V25H6Z" fill="#9a9ea8" />
    </svg>
  ),
  pan: (
    <svg width="32" height="32" viewBox="0 0 32 32" fill="#f4f5f8" stroke="#3b3d44" strokeWidth="1.5" strokeLinejoin="round">
      <path d="M11 31C8 25 3 22 1 18C2 15 6 17 9 20L7 7C7 4 10 4 11 7L13 15L14 3C14 0 17 0 18 3L18 15L21 5C22 2 25 3 24 6L22 17L27 11C29 9 32 10 30 13L26 21C25 26 23 28 22 31Z" />
    </svg>
  ),
  zoom: (
    <svg width="34" height="34" viewBox="0 0 34 34">
      <path d="M19 18L30 29" stroke="#333" strokeWidth="5" strokeLinecap="round" /><circle cx="12" cy="12" r="10.500" fill="#eef3f3" stroke="#444b55" strokeWidth="1.600" />
      <path d="M24 5H32M28 1V9M24 12H32" stroke="#333" strokeWidth="1.600" />
    </svg>
  ),
  window: (
    <svg width="34" height="34" viewBox="0 0 34 34">
      <path d="M3 2H32V32H3Z" fill="none" stroke="#777" strokeWidth="1.500" strokeDasharray="5 2" />
      <path d="M20 19L31 30" stroke="#333" strokeWidth="5" strokeLinecap="round" /><circle cx="13" cy="13" r="10.500" fill="#e6eeee" stroke="#444b55" strokeWidth="1.600" />
    </svg>
  ),
  display: (
    <svg width="31" height="32" viewBox="0 0 31 32" stroke="#3b3d44" strokeWidth="1.600">
      <path d="M1 1H30V24H1Z" fill="#fff" /><path d="M5 4H26V21H5Z" fill="#8fb0da" /><path d="M12 24H19L23 30H8Z" fill="#d8dae0" />
    </svg>
  ),
  grid: (
    <svg width="30" height="30" viewBox="0 0 30 30" stroke="#555963" strokeWidth="1">
      <defs><linearGradient id="gg" x1="0" x2="0" y1="0" y2="1"><stop offset="0" stopColor="#fff" /><stop offset="1" stopColor="#a8abb8" /></linearGradient></defs>
      <path d="M1 1H29V29H1Z" fill="url(#gg)" strokeWidth="1.600" /><path d="M5 1V29M9 1V29M13 1V29M17 1V29M21 1V29M25 1V29M1 5H29M1 9H29M1 13H29M1 17H29M1 21H29M1 25H29" />
    </svg>
  ),
  layout: (
    <svg width="30" height="26" viewBox="0 0 30 26" fill="#9db8dc" stroke="#2f4366" strokeWidth="1.600">
      <path d="M1 1H29V25H1Z" /><path d="M15 1V25M1 13H29" /><path d="M4 4H12V10H4ZM18 4H26V10H18ZM4 16H12V22H4ZM18 16H26V22H18Z" fill="none" stroke="#5a79ab" strokeWidth="1" />
    </svg>
  ),
};
const viewTools: { icon: keyof typeof ViewIcon; name: string; w: number; menu?: boolean; on?: boolean }[] = [
  { icon: "orbit", name: "Órbita", w: 66, menu: true },
  { icon: "look", name: "Mirar a", w: 42 },
  { icon: "pan", name: "Encuadre", w: 62 },
  { icon: "zoom", name: "Zoom", w: 52, on: true },
  { icon: "window", name: "Ventana de zoom", w: 66, menu: true },
  { icon: "display", name: "Configuración de visualización", w: 60, menu: true },
  { icon: "grid", name: "Rejilla y forzados", w: 62, menu: true },
  { icon: "layout", name: "Ventanas gráficas", w: 62, menu: true },
];

const playback: [string, number, React.ReactNode][] = [
  ["Inicio", 26, <path d="M0 2H4V30H0ZM25 2V30L5 16Z" />],
  ["Paso atrás", 26, <path d="M19 4V28L0 16ZM21 10H26V22H21Z" />],
  ["Reproducir", 24, <path d="M0 0L24 16L0 32Z" />],
  ["Paso adelante", 26, <path d="M7 4L26 16L7 28ZM0 10H4V22H0Z" />],
  ["Final", 24, <path d="M0 2L19 16L0 30ZM20 2H24V30H20Z" />],
];
const scaleSteps = [11, 16, 23, 28];

export default function App() {
  return (
    <Shell>
      <GlobalStyle />
      <TitleBar>
        <QuickAccess>
          <QuickButton $gap={39} aria-label="Panel de datos">
            <svg width="28" height="28" viewBox="0 0 28 28" fill="currentColor"><path d="M2 0H8V8H0V2ZM10 0H18V8H10ZM20 0H26L28 2V8H20ZM0 10H8V18H0ZM10 10H18V18H10ZM20 10H28V18H20ZM0 20H8V28H2L0 26ZM10 20H18V28H10ZM20 20H28V26L26 28H20Z" /></svg>
          </QuickButton>
          <QuickButton $gap={11} aria-label="Archivo">
            <svg width="26" height="32" viewBox="0 0 26 32" fill="currentColor"><path d="M2 0H16V10H26V30L24 32H2L0 30V2ZM18 0L26 8H18Z" /></svg>
          </QuickButton>
          <QuickButton $gap={37} aria-label="Menú de archivo"><Caret w={15} c="#656565" /></QuickButton>
          <QuickButton $gap={39} aria-label="Guardar">
            <svg width="28" height="28" viewBox="0 0 28 28" fill="currentColor" fillRule="evenodd"><path d="M2 0H26L28 2V26L26 28H5L0 23V2ZM6 2V12H22V2H19V9H9V2ZM8 18V26H11V21H17V26H20V18Z" /></svg>
          </QuickButton>
          <QuickButton $gap={13} aria-label="Deshacer">
            <svg width="26" height="24" viewBox="0 0 26 24" fill="none" stroke="currentColor" strokeWidth="3"><path d="M10 1L2 9L11 20M2 9C16 8 24 12 24 24" /></svg>
          </QuickButton>
          <QuickButton $gap={23} aria-label="Lista de deshacer"><Caret w={15} c="#656565" /></QuickButton>
          <QuickButton $gap={13} $faded aria-label="Rehacer">
            <svg width="26" height="24" viewBox="0 0 26 24" fill="none" stroke="currentColor" strokeWidth="3"><path d="M16 1L24 9L15 20M24 9C10 8 2 12 2 24" /></svg>
          </QuickButton>
          <QuickButton $gap={0} $faded aria-label="Lista de rehacer"><Caret w={15} c="#949494" /></QuickButton>
        </QuickAccess>
        <HomeTab aria-label="Inicio">
          <svg width="30" height="27" viewBox="0 0 30 27" fill="currentColor" fillRule="evenodd"><path d="M15 0L21 6V2H25V10L30 16H27V27H19V18H11V27H3V16H0ZM13 20H17V27H13Z" /></svg>
        </HomeTab>
        <DocumentTab>
          <DocumentName>
            <svg width="28" height="32" viewBox="0 0 28 32"><path d="M14 0L28 8L14 16L0 8Z" fill="#ffc59b" /><path d="M0 8L14 16V32L0 24Z" fill="#ff9448" /><path d="M28 8L14 16V32L28 24Z" fill="#ff6c00" /></svg>
            <span>PAC3_DOMÍNGUEZ_SÁNCHEZ-LANUZA_JULIA_FD_2D v21*</span>
          </DocumentName>
          <button aria-label="Cerrar"><svg width="20" height="20" viewBox="0 0 20 20" stroke="#7f7f7f" strokeWidth="3"><path d="M2 2L18 18M18 2L2 18" /></svg></button>
        </DocumentTab>
        <NewTab aria-label="Nueva pestaña"><svg width="26" height="26" viewBox="0 0 26 26" fill="currentColor"><path d="M10 0H16V10H26V16H16V26H10V16H0V10H10Z" /></svg></NewTab>
        <Subscribe>Suscríbase ahora</Subscribe>
        <AccountTools>
          <button aria-label="Extensiones">
            <svg width="32" height="32" viewBox="0 0 32 32"><circle cx="16" cy="16" r="16" fill="#656565" /><path d="M10 8C15 3 17 6 15 10L20 5M18 14L24 7M21 19L27 12M10 8C5 14 6 18 8 21M0 26L7 20M6 26L10 22C15 26 21 23 22 18" fill="none" stroke="#cbcbcb" strokeWidth="3" /></svg>
          </button>
          <button aria-label="Estado de trabajos">
            <svg width="32" height="32" viewBox="0 0 32 32"><circle cx="16" cy="16" r="14.500" fill="none" stroke="#656565" strokeWidth="2.500" /><circle cx="16" cy="16" r="11.500" fill="#656565" /><path d="M16 8V17H23" fill="none" stroke="#cbcbcb" strokeWidth="3" /></svg>
          </button>
          <button aria-label="Notificaciones">
            <svg width="32" height="32" viewBox="0 0 32 32"><path d="M14 0H18V3C23 5 25 9 25 15C25 20 27 22 29 24V26H3V24C5 22 7 20 7 15C7 9 9 5 14 3ZM12 28H20L16 32Z" fill="#656565" /><circle cx="24" cy="8" r="6.500" fill="#0696d7" stroke="#cbcbcb" /></svg>
          </button>
          <button aria-label="Ayuda">
            <svg width="32" height="32" viewBox="0 0 32 32"><circle cx="16" cy="16" r="16" fill="#656565" /><path d="M10 12C10 4 22 4 22 11C22 15 16 15 16 20M16 23V27" fill="none" stroke="#cbcbcb" strokeWidth="3.500" /></svg>
          </button>
          <Avatar>JD</Avatar>
        </AccountTools>
      </TitleBar>

      <Ribbon>
        <Workspace>DISEÑO<Caret /></Workspace>
        <RibbonBody>
          <Tabs role="tablist">
            {["SOLIDO", "SUPERFICIE", "MALLA", "CHAPA", "PLÁSTICO", "UTILIDADES"].map((t, i) => (
              <Tab key={t} role="tab" aria-selected={i === 0} $on={i === 0}>{t}</Tab>
            ))}
          </Tabs>
          <Groups>
            {toolGroups.map((g) => (
              <Group key={g.name} $w={g.w}>
                <Tools>
                  {g.tools.map(([icon, label]) => <Tool key={icon} aria-label={label}>{icons[icon]}</Tool>)}
                </Tools>
                <GroupMenu>{g.name}<Caret /></GroupMenu>
              </Group>
            ))}
          </Groups>
        </RibbonBody>
      </Ribbon>

      <Canvas>
        <Scene viewBox="0 234 2880 1466" preserveAspectRatio="xMidYMid slice">
          <Grid />
          <path d="M0 839.500L2277 834.500" stroke="#ffa6a6" strokeWidth="2.500" />
          <path d="M2233.500 234L2238 1700" stroke="#b4ffb4" strokeWidth="3" />
          <path d="M2275 234L2280 1700" stroke="#9a9a9a" strokeWidth="3" />
          <ellipse cx="2235.500" cy="835" rx="18" ry="14" fill="none" stroke="#bbb" strokeWidth="4" />
          <path d="M2235 835V821A18 14 0 0 0 2217 835ZM2236 835V849A18 14 0 0 0 2254 835Z" fill="#bbb" />
          {axisLabels.map((n, i) => (
            <text key={i} x={n === 0 ? 2278 : 2281 + i} y={336 + i * 169.4} fontFamily="Liberation Sans" fontSize="28" fill="#868686">{n}</text>
          ))}
          <Model />
          <ViewCube />
        </Scene>
        <Overlay>
          <PanelHead>
            <PanelIconSlot aria-label="Contraer navegador"><svg width="20" height="12" viewBox="0 0 20 12" fill="#222"><path d="M10 0V12L0 6ZM20 0V12L10 6Z" /></svg></PanelIconSlot>
            <PanelTitle>NAVEGADOR</PanelTitle>
            <button aria-label="Ocultar"><Dot /></button><Grip />
          </PanelHead>
          <Tree>
            <TreeRow $depth={0}>
              <Toggle aria-label="Contraer"><Open /></Toggle>
              <RowBody>
                <RowIcon $tight><Eye /></RowIcon>
                <RootName><Cube /><span>PAC3_DOMÍNGUEZ_SÁNCHEZ...</span></RootName>
                <ActiveRadio type="radio" name="activo" defaultChecked aria-label="Activar componente" />
              </RowBody>
            </TreeRow>
            {rows.map((r) => (
              <TreeRow key={r.name} $depth={r.depth}>
                <Toggle aria-label={r.state === "open" ? "Contraer" : "Expandir"} disabled={!r.state}>
                  {r.state === "open" ? <Open /> : r.state === "closed" ? <Closed /> : null}
                </Toggle>
                <RowBody>
                  {r.eye && <RowIcon>{r.eye === "on" ? <Eye /> : <EyeOff />}</RowIcon>}
                  <RowIcon>{rowIcon[r.icon]}</RowIcon>
                  <RowName>{r.name}</RowName>
                </RowBody>
              </TreeRow>
            ))}
          </Tree>
          <Bottom>
            <PanelHead>
              <PanelIconSlot as="span" />
              <PanelTitle>COMENTARIOS</PanelTitle>
              <button aria-label="Mostrar comentarios"><Dot plus /></button><Grip />
            </PanelHead>
            <ViewTools>
              {viewTools.map((v) => (
                <ViewTool key={v.icon} $w={v.w} $on={v.on} aria-label={v.name}>
                  {ViewIcon[v.icon]}{v.menu && <Caret h={12} />}
                </ViewTool>
              ))}
            </ViewTools>
          </Bottom>
        </Overlay>
      </Canvas>

      <Timeline>
        <ScrollTrack><ScrollThumb /></ScrollTrack>
        <TimelineRow>
          <Playback>
            {playback.map(([name, w, shape]) => (
              <button key={name} aria-label={name}><svg width={w} height="32" viewBox={`0 0 ${w} 32`} fill="#4a4a4c">{shape}</svg></button>
            ))}
          </Playback>
          <Features>
            {Array.from({ length: 52 }, (_, i) => (
              <Feature key={i}>
                <button aria-label={scaleSteps.includes(i) ? "Escala" : "Mover"}>{scaleSteps.includes(i) ? <ScaleSmall /> : <MoveSmall />}</button>
              </Feature>
            ))}
          </Features>
          <svg width="22" height="64" viewBox="0 0 22 64" fill="#656565"><path d="M0 0H22V9L13 18V64H9V18L0 9Z" /></svg>
          <Spacer />
          <SettingsButton aria-label="Preferencias"><Gear /></SettingsButton>
        </TimelineRow>
      </Timeline>
    </Shell>
  );
}
